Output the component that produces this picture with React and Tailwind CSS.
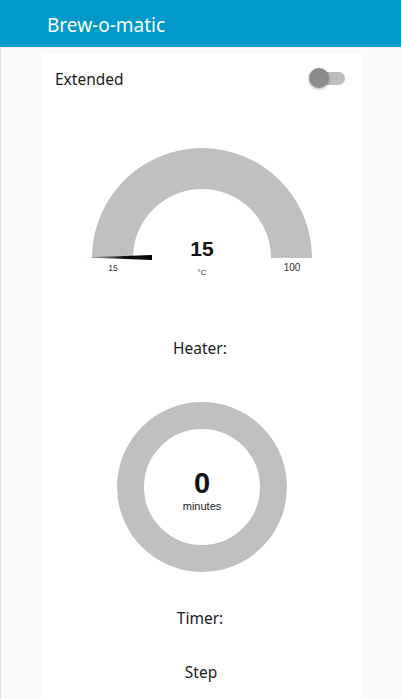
import React from 'react';

const uiFont = { fontFamily: '"Noto Sans", "Open Sans", sans-serif' };

function Toggle() {
  return (
    <div className="relative w-[36px] h-[20px] flex items-center">
      <div className="w-[34px] h-[13px] ml-[2px] rounded-full bg-[#bdbdbd]" />
      <div className="absolute left-0 top-0 w-[20px] h-[20px] rounded-full bg-[#8c8c8c] shadow-[0_1px_3px_rgba(0,0,0,0.35)]" />
    </div>
  );
}

function TempGauge() {
  // arc centre at (160,156), outer 110, inner 69
  return (
    <svg width="320" height="223" className="block">
      <defs>
        <linearGradient id="needle" x1="0" x2="1" y1="0" y2="0">
          <stop offset="0" stopColor="#000" stopOpacity="0" />
          <stop offset="0.6" stopColor="#000" stopOpacity="0.9" />
          <stop offset="1" stopColor="#000" />
        </linearGradient>
      </defs>
      <path d="M50 156 A110 110 0 0 1 270 156 L229 156 A69 69 0 0 0 91 156 Z" fill="#bfbfbf" />
      <polygon points="41,155.5 110,153 110,158" fill="url(#needle)" />
      <g fontFamily='"Liberation Sans", Arial, sans-serif' textAnchor="middle" fill="#111">
        <text x="160" y="154" fontSize="21" fontWeight="bold">15</text>
        <text x="71" y="169" fontSize="8.5" fill="#333">15</text>
        <text x="160" y="173" fontSize="8" fill="#333">°C</text>
        <text x="250" y="169" fontSize="10" fill="#333">100</text>
      </g>
    </svg>
  );
}

function TimerDonut() {
  return (
    <svg width="320" height="224" className="block">
      <circle cx="160" cy="114" r="71.5" fill="none" stroke="#bfbfbf" strokeWidth="27" />
      <g fontFamily='"Liberation Sans", Arial, sans-serif' textAnchor="middle" fill="#111">
        <text x="160" y="120" fontSize="29" fontWeight="bold">0</text>
        <text x="160" y="137" fontSize="11" fill="#222">minutes</text>
      </g>
    </svg>
  );
}

export default function App() {
  return (
    <div className="min-h-[699px] bg-[#fafafa] border-l border-[#dcdcdc]" style={uiFont}>
      <div className="h-[47px] bg-[#0099cc] flex items-center pl-[47px] pt-[3px] -ml-px">
        <span className="text-white text-[19px] leading-none">Brew-o-matic</span>
      </div>
      <div className="ml-[41px] mt-[7px] w-[320px] bg-white text-[#1a1a1a]">
        <div className="h-[48px] flex items-center justify-between pl-[13px] pr-[17px]">
          <span className="text-[15.5px] pt-[3px]">Extended</span>
          <Toggle />
        </div>
        <TempGauge />
        <div className="h-[48px] flex items-center justify-center text-[15.5px] pr-[4px]">Heater:</div>
        <TimerDonut />
        <div className="h-[44px] flex items-center justify-center text-[15.5px] pr-[4px]">Timer:</div>
        <div className="h-[62px] flex items-center justify-center text-[15.5px] pr-[2px] pt-[2px]">Step</div>
      </div>
    </div>
  );
}
